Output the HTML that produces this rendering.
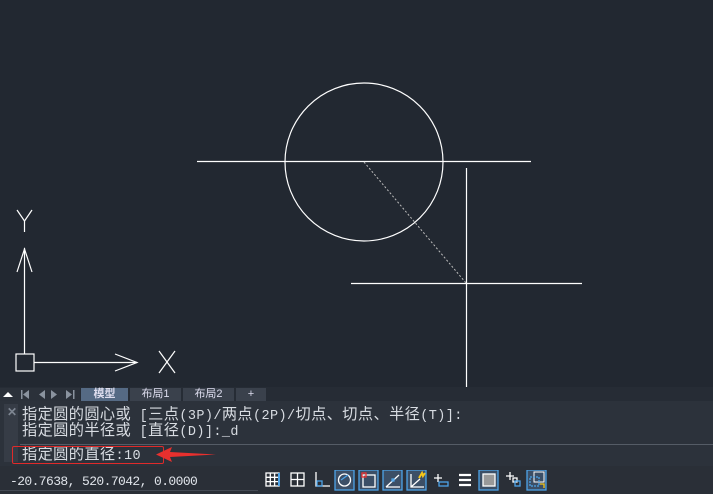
<!DOCTYPE html>
<html><head><meta charset="utf-8"><style>
body{margin:0;width:713px;height:494px;overflow:hidden;background:#222831;font-family:"Liberation Mono","Noto Sans CJK SC",monospace;position:relative}
.abs{position:absolute}
.tab{position:absolute;top:388px;height:13px;font:11px "Liberation Sans","Noto Sans CJK SC",sans-serif;color:#dde;text-align:center;line-height:13px}
.cmd{position:absolute;left:22px;font-size:13.5px;color:#d8dce2;line-height:16px;white-space:nowrap;letter-spacing:0.4px;font-family:"Liberation Mono","Noto Sans CJK SC",monospace}
.cmd b{font-weight:normal;font-size:15.2px}
</style></head><body>
<svg class="abs" style="left:0;top:0" width="713" height="387">
<g stroke="#fff" stroke-width="1.2" fill="none">
<circle cx="364" cy="162" r="79"/>
<line x1="197" y1="161.5" x2="531" y2="161.5"/>
<line x1="466.5" y1="168" x2="466.5" y2="387"/>
<line x1="351" y1="283.5" x2="582" y2="283.5"/>
<line x1="364" y1="162" x2="466" y2="283" stroke-dasharray="2,2" stroke="#bbb" stroke-width="1"/>
<line x1="24.5" y1="248" x2="24.5" y2="354"/>
<polyline points="17,272 24.5,249 32,272"/>
<line x1="17" y1="210" x2="24.5" y2="221"/><line x1="32" y1="210" x2="24.5" y2="221"/><line x1="24.5" y1="221" x2="24.5" y2="232"/>
<rect x="16" y="354" width="18" height="17"/>
<line x1="34" y1="362.5" x2="137" y2="362.5"/>
<polyline points="115,354 137,362.5 115,371"/>
<line x1="159" y1="351" x2="175" y2="373"/><line x1="175" y1="351" x2="159" y2="373"/>
</g></svg>
<div class="abs" style="left:0;top:387px;width:713px;height:14px;background:#262c35"></div>
<svg class="abs" style="left:0;top:388px" width="80" height="13">
<rect x="0" y="0" width="80" height="13" fill="#2b313a"/>
<polygon points="3,9 8,4 13,9" fill="#fff"/>
<g fill="#8a939f"><rect x="21" y="2" width="1.5" height="9"/><polygon points="29,2 23,6.5 29,11"/>
<polygon points="45,2 39,6.5 45,11"/><polygon points="51,2 57,6.5 51,11"/>
<polygon points="66,2 72,6.5 66,11"/><rect x="73" y="2" width="1.5" height="9"/></g></svg>
<div class="tab" style="left:81px;width:47px;background:#556a84;font-weight:bold">模型</div>
<div class="tab" style="left:130px;width:51px;background:#3a414c">布局1</div>
<div class="tab" style="left:183px;width:51px;background:#3a414c">布局2</div>
<div class="tab" style="left:236px;width:30px;background:#3a414c">+</div>
<div class="abs" style="left:0;top:401px;width:713px;height:65px;background:#2c323b"></div>
<div class="abs" style="left:4px;top:404px;width:14px;height:58px;background:#363c46"></div>
<div class="abs" style="left:7px;top:405px;color:#7d8591;font:bold 12px 'Liberation Sans',sans-serif">✕</div>
<div class="cmd" style="top:407px"><b>指定圆的圆心或</b> [<b>三点</b>(3P)/<b>两点</b>(2P)/<b>切点、切点、半径</b>(T)]:</div>
<div class="cmd" style="top:423px"><b>指定圆的半径或</b> [<b>直径</b>(D)]:_d</div>
<div class="abs" style="left:20px;top:444px;width:693px;height:1px;background:#555c66"></div>
<div class="cmd" style="top:447px"><b>指定圆的直径</b>:10</div>
<div class="abs" style="left:12px;top:446px;width:152px;height:18px;border:1.5px solid #e02a2a;border-radius:2px;box-sizing:border-box"></div>
<svg class="abs" style="left:150px;top:445px" width="70" height="20"><polygon points="6,9.5 22,2 20,7 66,9.5 20,12 22,17" fill="#e8302e"/></svg>
<div class="abs" style="left:0;top:466px;width:713px;height:28px;background:#2a2f37"></div>
<div class="abs" style="left:0;top:490px;width:258px;height:1px;background:#444a54"></div>
<div class="abs" style="left:10px;top:474px;color:#e0e4ea;font:13px 'Liberation Mono',monospace;letter-spacing:-0.6px">-20.7638, 520.7042, 0.0000</div>
<svg class="abs" style="left:264px;top:470px" width="285" height="22" fill="none" stroke="#fff" stroke-width="1.3">
<g><rect x="2" y="3" width="13" height="13"/><path d="M6.3 3v13M10.6 3v13M2 7.3h13M2 11.6h13"/><path d="M15 3v13" stroke="#4da3e8" stroke-width="2"/></g>
<g transform="translate(25,0)"><rect x="2" y="3" width="13" height="13"/><path d="M8.5 3v13M2 9.5h13"/></g>
<g transform="translate(50,0)"><path d="M2 2v14h14"/><rect x="3" y="11" width="5" height="5" stroke="#4da3e8"/></g>
<g transform="translate(72,0)"><rect x="-1" y="0" width="19" height="20" fill="#3c4f66" stroke="#4da3e8"/><circle cx="8.5" cy="10" r="6"/><path d="M5 10l7-5" stroke="#4da3e8"/></g>
<g transform="translate(96,0)"><rect x="-1" y="0" width="19" height="20" fill="#3c4f66" stroke="#4da3e8"/><rect x="3" y="5" width="12" height="12"/><rect x="2" y="3" width="4" height="4" stroke="#e33"/></g>
<g transform="translate(120,0)"><rect x="-1" y="0" width="19" height="20" fill="#3c4f66" stroke="#4da3e8"/><path d="M2 17l13-12M2 17h14"/><rect x="8" y="9" width="2" height="2" stroke="#4da3e8"/></g>
<g transform="translate(144,0)"><rect x="-1" y="0" width="19" height="20" fill="#3c4f66" stroke="#4da3e8"/><path d="M3 4v13h13M3 17l9-8"/><path d="M11 8l3-5 1 3 2-3" stroke="#f5c518" stroke-width="2"/></g>
<g transform="translate(168,0)"><path d="M2 8h8M6 4v8"/><rect x="7" y="12" width="9" height="4" stroke="#4da3e8"/></g>
<g transform="translate(192,0)" stroke-width="2.2"><path d="M3 5h12M3 10h12M3 15h12"/></g>
<g transform="translate(216,0)"><rect x="-1" y="0" width="19" height="20" fill="#3c4f66" stroke="#4da3e8"/><rect x="3" y="4" width="12" height="12" fill="#999" stroke="#fff"/></g>
<g transform="translate(240,0)"><path d="M2 6h8M6 2v8"/><rect x="9" y="8" width="4" height="4"/><rect x="11" y="11" width="5" height="5" stroke="#4da3e8"/></g>
<g transform="translate(264,0)"><rect x="-1" y="0" width="19" height="20" fill="#3c4f66" stroke="#4da3e8"/><rect x="6" y="2" width="10" height="10" stroke-width="1"/><rect x="2" y="7" width="9" height="9" stroke="#4da3e8" stroke-dasharray="2,1"/><path d="M12 14h4v4" stroke="#f5c518"/></g>
</svg>
</body></html>
